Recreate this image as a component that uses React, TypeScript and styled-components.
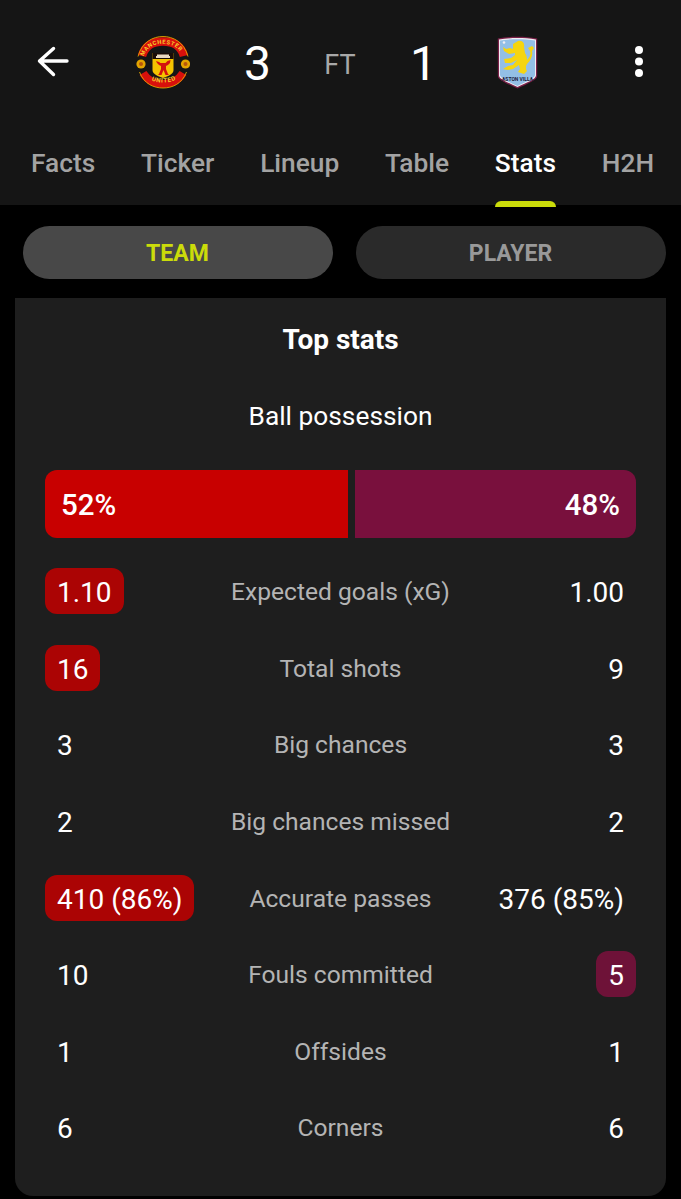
import React from "react";
import styled, { createGlobalStyle } from "styled-components";

const Global = createGlobalStyle`
  html, body { margin: 0; padding: 0; background: #000; }
  body { font-family: Roboto, "Liberation Sans", sans-serif; }
`;

const Page = styled.div`
  width: 681px;
  height: 1199px;
  background: #000;
  overflow: hidden;
`;

const Header = styled.header`
  background: #151515;
  height: 205px;
`;

const ScoreBar = styled.div`
  display: grid;
  grid-template-columns: 106px 114px 74px 92px 74px 114px 1fr;
  align-items: center;
  justify-items: center;
  height: 124px;
`;

const Score = styled.span`
  color: #fff;
  font-size: 48px;
  line-height: 60px;
  font-weight: 400;
  padding-left: 1px;
  padding-top: 4px;
`;

const Status = styled.span`
  color: #a8a8a8;
  font-size: 27px;
  line-height: 36px;
  padding-top: 6px;
`;

const MenuCell = styled.div`
  justify-self: end;
  width: 24px;
  margin-right: 30px;
  display: flex;
  justify-content: center;
`;

const Tabs = styled.nav`
  display: flex;
  gap: 45.8px;
  height: 81px;
  padding-left: 31px;
`;

const Tab = styled.div<{ $active?: boolean }>`
  position: relative;
  height: 78px;
  font-size: 26.3px;
  line-height: 78px;
  font-weight: 500;
  color: ${(p) => (p.$active ? "#fff" : "#a3a3a3")};
`;

const Indicator = styled.span`
  position: absolute;
  left: 0;
  right: 0;
  bottom: -5px;
  height: 6px;
  background: #cbdc0a;
  border-radius: 6px 6px 0 0;
`;

const Toggle = styled.div`
  display: grid;
  grid-template-columns: 310px 310px;
  gap: 23px;
  padding: 21px 0 19px 23px;
`;

const Pill = styled.div<{ $active?: boolean }>`
  height: 53px;
  border-radius: 27px;
  background: ${(p) => (p.$active ? "#484848" : "#2a2a2a")};
  color: ${(p) => (p.$active ? "#cbdc0a" : "#999")};
  font-size: 23px;
  font-weight: 700;
  line-height: 55px;
  text-align: center;
  padding-right: 1px;
`;

const Card = styled.section`
  margin: 0 15px;
  width: 651px;
  height: 898px;
  box-sizing: border-box;
  padding: 22px 30px 0;
  background: #1e1e1e;
  border-radius: 0 0 18px 18px;
`;

const Title = styled.h2`
  margin: 0;
  color: #fff;
  font-size: 28px;
  line-height: 40px;
  font-weight: 700;
  text-align: center;
`;

const SubTitle = styled.div`
  margin-top: 35px;
  color: #fff;
  font-size: 26.3px;
  line-height: 42px;
  text-align: center;
`;

const Bar = styled.div`
  margin-top: 33px;
  display: grid;
  grid-template-columns: 303px 281px;
  gap: 7px;
  height: 68px;
  margin-bottom: 15px;
`;

const BarSide = styled.div<{ $away?: boolean }>`
  display: flex;
  align-items: center;
  justify-content: ${(p) => (p.$away ? "flex-end" : "flex-start")};
  padding: 2px 16px 0;
  background: ${(p) => (p.$away ? "#79103d" : "#c80000")};
  border-radius: ${(p) => (p.$away ? "0 12px 12px 0" : "12px 0 0 12px")};
  color: #fff;
  font-size: 29.5px;
  font-weight: 500;
`;

const Row = styled.div`
  display: grid;
  grid-template-columns: 1fr auto 1fr;
  align-items: center;
  height: 76.6px;
`;

const Label = styled.div`
  color: #b4b4b4;
  font-size: 24.6px;
  text-align: center;
  padding-top: 1px;
`;

const ValueCell = styled.div<{ $away?: boolean }>`
  display: flex;
  justify-content: ${(p) => (p.$away ? "flex-end" : "flex-start")};
`;

const Value = styled.span<{ $hl?: "home" | "away" }>`
  height: 46px;
  line-height: 49px;
  padding: 0 12px;
  border-radius: 12px;
  color: #fff;
  font-size: 28px;
  white-space: nowrap;
  background: ${(p) =>
    p.$hl === "home" ? "#ab0404" : p.$hl === "away" ? "#6e1238" : "transparent"};
`;

const BackIcon = () => (
  <svg width="32" height="32" viewBox="0 0 32 32" fill="none" stroke="#fff" strokeWidth="3.4" strokeLinecap="round" strokeLinejoin="round">
    <path d="M30 15H2.500M16.500 2.500 2.500 15l14 13.500" />
  </svg>
);

const MenuIcon = () => (
  <svg width="10" height="32" viewBox="0 0 10 32" fill="#fff">
    <circle cx="5" cy="4" r="4" />
    <circle cx="5" cy="15.5" r="4" />
    <circle cx="5" cy="27" r="4" />
  </svg>
);

const UnitedCrest = () => (
  <svg width="54" height="54" viewBox="0 0 54 54">
    <path d="M6 21C9 10 17 6.500 27 6.500s18 3.500 21 14.500" fill="none" stroke="#d8100c" strokeWidth="8.500" />
    <path d="M2 21.500C6 7 17 1.500 27 1.500S48 7 52 21.500" fill="none" stroke="#e2a900" strokeWidth=".9" />
    <path d="M7 38c5 8 13 11 20 11s15-3 20-11" fill="none" stroke="#d8100c" strokeWidth="8" />
    <path d="M3.500 37C8 49 18 53 27 53s19-4 23.500-16" fill="none" stroke="#e2a900" strokeWidth=".9" />
    <circle cx="5" cy="29" r="4.600" fill="#e2a400" />
    <circle cx="5" cy="29" r="2" fill="#b8560a" />
    <circle cx="49.500" cy="29" r="4.600" fill="#e2a400" />
    <circle cx="49.500" cy="29" r="2" fill="#b8560a" />
    <path d="M16.500 18h21v17c0 4-5 6-10.500 8-5.500-2-10.500-4-10.500-8z" fill="#f4c300" />
    <path d="M16.500 18h21v6h-21z" fill="#1a0d08" />
    <path d="M20 23v-2h1v-1.500h12V21h1v2z" fill="#e9d9c2" />
    <path d="M20 26l3 1 1.500 1h5l2-2 3-1-.5 3-2 2-2 1v3l2 5 1 1h-3.500l-2-5-2 5h-3.500l1-1 2-5v-3l-2-1-2-2z" fill="#d3120e" />
    <defs>
      <path id="mu-arc-top" d="M7.500 21.500C11 12 19 8.800 27 8.800s16 3.200 19.500 12.700" />
      <path id="mu-arc-bottom" d="M10 41c4 5 10.500 6.500 17 6.500s13-1.500 17-6.500" />
    </defs>
    <text fontFamily="Roboto, sans-serif" fontSize="5.800" fontWeight="700" fill="#f6cf2c" textLength="44">
      <textPath href="#mu-arc-top">MANCHESTER</textPath>
    </text>
    <text fontFamily="Roboto, sans-serif" fontSize="6.200" fontWeight="700" fill="#f6cf2c" letterSpacing=".7">
      <textPath href="#mu-arc-bottom" startOffset="7">UNITED</textPath>
    </text>
  </svg>
);

const VillaCrest = () => (
  <svg width="41" height="53" viewBox="0 0 41 53">
    <path d="M.8 2.500C14 .3 27 .3 40.200 2.500V40c0 4-10 8-19.700 12.500C10.800 48 .8 44 .8 40z" fill="#7a2048" />
    <path d="M2 3.500C14 1.600 27 1.600 39 3.500V39.500c0 3.500-9 7-18.500 11.500C11 46.500 2 43 2 39.500z" fill="#f1eef2" />
    <path d="M3 4.500C14 2.800 27 2.800 38 4.500v34.500c0 3-8 6.500-17.500 11C11 45.500 3 42 3 39z" fill="#93bfe6" />
    <path
      d="M21 5C25 4 28 7 27 11L28 17C30 20 30 22 30 24 33 21 34 18 33 15L31 12 35 10 37 12 35 15C36 19 34 24 30 28L29 30 29 33 30 35 27 38 21 36 23 33 22 29 16 33 11 34 6 33 11 30 16 29 20 24 14 27 8 27 7 23 14 22 18 19 18 17 12 18 7 15 6 11 9 13 13 12 16 13 16 8Z"
      fill="#f6d50f"
    />
    <circle cx="7" cy="6.500" r="1.300" fill="#f1eef2" />
    <text x="20.500" y="45" fontFamily="Roboto, sans-serif" fontSize="5.500" fontWeight="700" fill="#1c1c3c" textAnchor="middle" textLength="31" lengthAdjust="spacingAndGlyphs">
      ASTON VILLA
    </text>
  </svg>
);

const tabs = ["Facts", "Ticker", "Lineup", "Table", "Stats", "H2H"];

type Stat = { label: string; home: string; away: string; hl?: "home" | "away" };

const stats: Stat[] = [
  { label: "Expected goals (xG)", home: "1.10", away: "1.00", hl: "home" },
  { label: "Total shots", home: "16", away: "9", hl: "home" },
  { label: "Big chances", home: "3", away: "3" },
  { label: "Big chances missed", home: "2", away: "2" },
  { label: "Accurate passes", home: "410 (86%)", away: "376 (85%)", hl: "home" },
  { label: "Fouls committed", home: "10", away: "5", hl: "away" },
  { label: "Offsides", home: "1", away: "1" },
  { label: "Corners", home: "6", away: "6" },
];

export default function App() {
  return (
    <Page>
      <Global />
      <Header>
        <ScoreBar>
          <BackIcon />
          <UnitedCrest />
          <Score>3</Score>
          <Status>FT</Status>
          <Score>1</Score>
          <VillaCrest />
          <MenuCell>
            <MenuIcon />
          </MenuCell>
        </ScoreBar>
        <Tabs>
          {tabs.map((t) => (
            <Tab key={t} $active={t === "Stats"}>
              {t}
              {t === "Stats" && <Indicator />}
            </Tab>
          ))}
        </Tabs>
      </Header>
      <Toggle>
        <Pill $active>TEAM</Pill>
        <Pill>PLAYER</Pill>
      </Toggle>
      <Card>
        <Title>Top stats</Title>
        <SubTitle>Ball possession</SubTitle>
        <Bar>
          <BarSide>52%</BarSide>
          <BarSide $away>48%</BarSide>
        </Bar>
        {stats.map((s) => (
          <Row key={s.label}>
            <ValueCell>
              <Value $hl={s.hl === "home" ? "home" : undefined}>{s.home}</Value>
            </ValueCell>
            <Label>{s.label}</Label>
            <ValueCell $away>
              <Value $hl={s.hl === "away" ? "away" : undefined}>{s.away}</Value>
            </ValueCell>
          </Row>
        ))}
      </Card>
    </Page>
  );
}
